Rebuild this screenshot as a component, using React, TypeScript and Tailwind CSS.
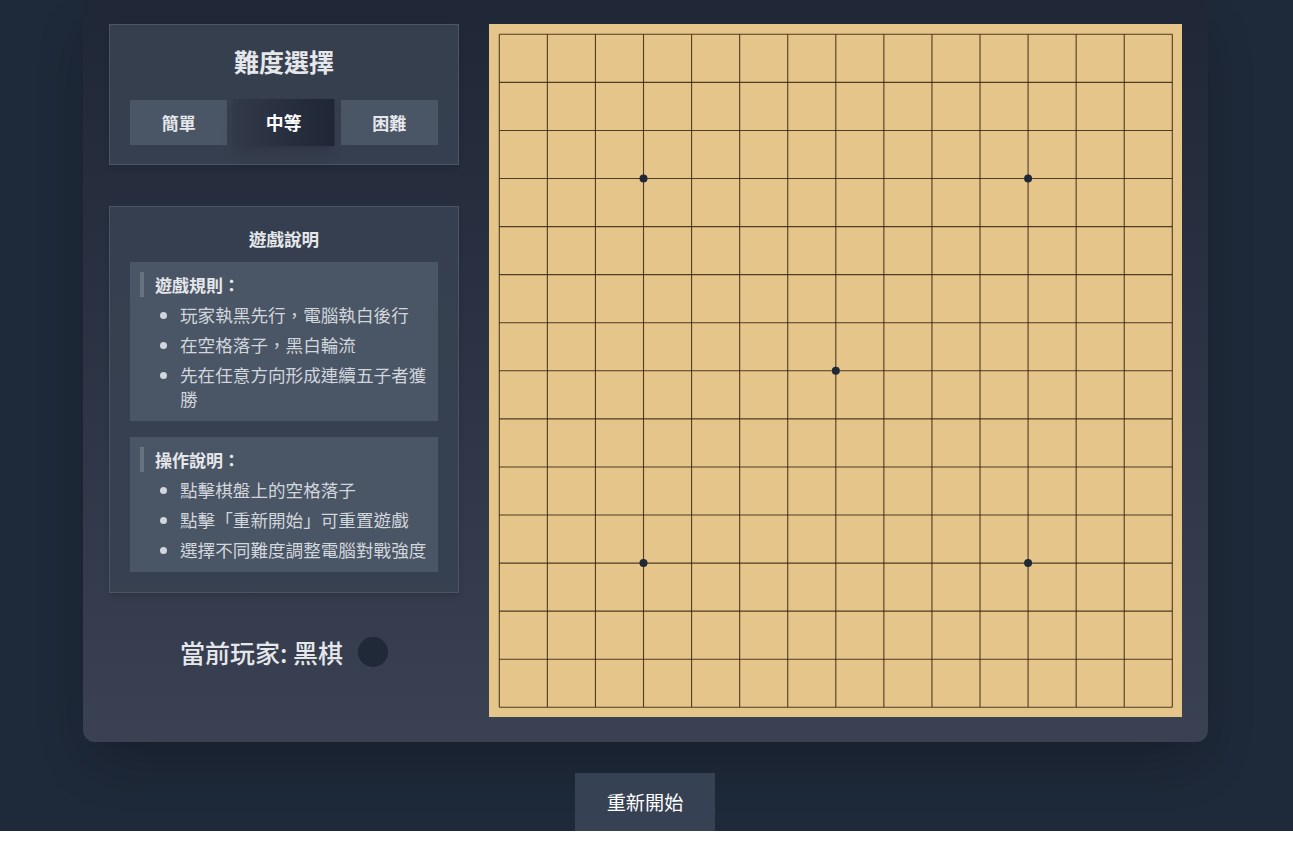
import React, { useState } from "react";

const FONT = { fontFamily: '"Noto Sans CJK TC", "Noto Sans", sans-serif' };

const SIZE = 693;
const PAD = 10;
const LINES = 15;
const STEP = (SIZE - PAD * 2) / (LINES - 1);
const STARS = [
  [3, 3],
  [11, 3],
  [7, 7],
  [3, 11],
  [11, 11],
];

const Board = () => {
  const pos = (i: number) => PAD + i * STEP + 0.3;
  return (
    <div className="w-[693px] h-[693px] shrink-0 bg-[#e5c589]">
      <svg width={SIZE} height={SIZE} viewBox={`0 0 ${SIZE} ${SIZE}`}>
        {Array.from({ length: LINES }).map((_, i) => (
          <g key={i}>
            <line x1={pos(0)} y1={pos(i)} x2={pos(LINES - 1)} y2={pos(i)} stroke="rgba(40,28,10,0.8)" strokeWidth={1.1} />
            <line x1={pos(i)} y1={pos(0)} x2={pos(i)} y2={pos(LINES - 1)} stroke="rgba(40,28,10,0.8)" strokeWidth={1.1} />
          </g>
        ))}
        {STARS.map(([x, y]) => (
          <circle key={`${x}-${y}`} cx={pos(x)} cy={pos(y)} r={4} fill="#1f2937" />
        ))}
      </svg>
    </div>
  );
};

const levels = ["簡單", "中等", "困難"];

const Section = ({ title, items }: { title: string; items: string[] }) => (
  <div className="bg-gray-600 p-[10px]">
    <h4 className="border-l-4 border-gray-500 pl-[11px] text-[17px] leading-[25px] font-bold text-gray-200 mb-[6px]">
      {title}
    </h4>
    <ul className="list-disc pl-10 text-gray-300 text-[17.6px] leading-6 space-y-[6px]">
      {items.map((t) => (
        <li key={t}>{t}</li>
      ))}
    </ul>
  </div>
);

export default function App() {
  const [level, setLevel] = useState("中等");

  return (
    <div className="flex flex-col bg-gray-800" style={FONT}>
      <div className="-mt-[3px] ml-[83px] w-[1125px] rounded-xl bg-gradient-to-b from-[#1f2737] to-[#394152] pt-[27px] px-[26px] pb-[25px] shadow-2xl flex gap-[30px]">
        {/* left column */}
        <div className="w-[350px] shrink-0 flex flex-col">
          <div className="border border-gray-600 bg-[#394151]/90 pt-5 pb-[19px] px-5 shadow-md">
            <h2 className="text-center text-[25px] leading-8 font-bold text-gray-200 mb-[23px]">難度選擇</h2>
            <div className="flex gap-2">
              {levels.map((l) => (
                <button
                  key={l}
                  onClick={() => setLevel(l)}
                  className={
                    l === level
                      ? "flex-1 h-[45px] scale-105 bg-gradient-to-r from-[#323a4a] to-[#1f2636] text-white text-[17px] font-semibold shadow-lg"
                      : "flex-1 h-[45px] bg-gray-600 text-gray-200 text-[17px] font-semibold"
                  }
                >
                  {l}
                </button>
              ))}
            </div>
          </div>

          <div className="mt-[41px] border border-gray-600 bg-[#374151]/90 p-5 shadow-md">
            <h3 className="text-center text-[17.6px] leading-6 font-bold text-gray-200 mb-[11px]">遊戲說明</h3>
            <div className="flex flex-col gap-4">
              <Section
                title="遊戲規則："
                items={["玩家執黑先行，電腦執白後行", "在空格落子，黑白輪流", "先在任意方向形成連續五子者獲勝"]}
              />
              <Section
                title="操作說明："
                items={["點擊棋盤上的空格落子", "點擊「重新開始」可重置遊戲", "選擇不同難度調整電腦對戰強度"]}
              />
            </div>
          </div>

          <div className="mt-[44px] flex items-center justify-center gap-[15px]">
            <span className="text-[25px] leading-[30px] font-medium text-gray-200">當前玩家: 黑棋</span>
            <span className="w-[30px] h-[30px] rounded-full bg-[#1f2937]" />
          </div>
        </div>

        <Board />
      </div>

      <button className="mt-[31px] ml-[575px] w-[140px] h-[58px] bg-gray-700 text-white text-[19.2px] font-normal">
        重新開始
      </button>
    </div>
  );
}
